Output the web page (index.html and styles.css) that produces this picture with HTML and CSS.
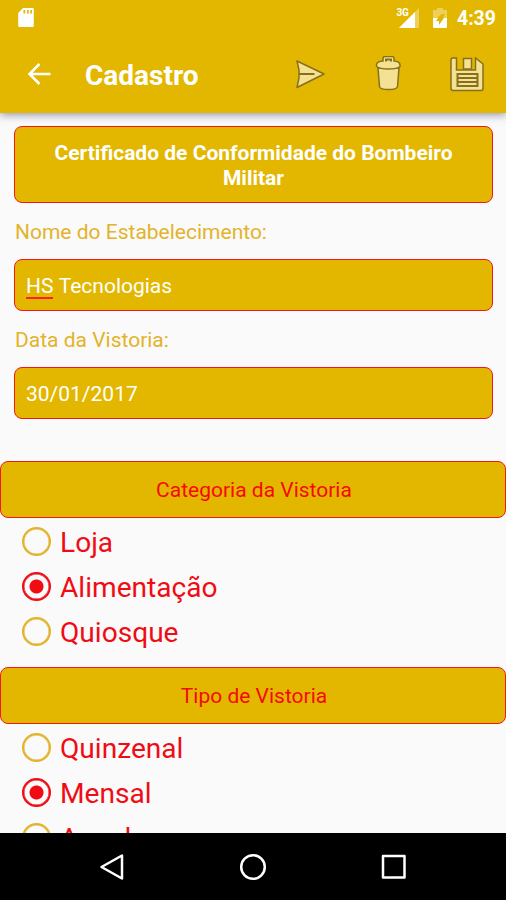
FILE: index.html
```html
<!DOCTYPE html>
<html lang="pt-BR">
<head>
    <meta charset="UTF-8">
    <meta name="viewport" content="width=device-width, initial-scale=1.0">
    <link rel="stylesheet" href="styles.css">
    <title>Cadastro</title>
</head>
<body>
    <header class="header">
        <div class="status-bar">
            <svg class="sd-card" width="18" height="22" viewBox="0 0 18 22">
                <path fill="#fff" fill-rule="evenodd" d="M6 1h9.500a1.300 1.300 0 0 1 1.300 1.300v16.400a1.300 1.300 0 0 1-1.300 1.300h-13a1.300 1.300 0 0 1-1.300-1.300V6zM6.500 3v3.500h1.700V3zM10 3v3.500h1.700V3zM13.300 3v3.500H15V3z"/>
            </svg>
            <div class="signal">
                <span class="network">3G</span>
                <svg width="21" height="20" viewBox="0 0 21 20">
                    <path fill="#fff" fill-opacity=".35" d="M0 20L20 0v20z"/>
                    <path fill="#fff" d="M0 20L16 4v16z"/>
                </svg>
            </div>
            <svg class="battery" width="14" height="20" viewBox="0 0 14 20">
                <path fill="#fff" fill-opacity=".35" d="M4 0h6v2h4v8h-4L12 6H9L4 10H0V2h4z"/>
                <path fill="#fff" fill-rule="evenodd" d="M0 10h5L3 13h3v4l5-7h3v9a1 1 0 0 1-1 1H1a1 1 0 0 1-1-1z"/>
            </svg>
            <span class="clock">4:39</span>
        </div>
        <div class="toolbar">
            <svg class="back" width="24" height="24" viewBox="0 0 24 24" fill="none" stroke="#fff" stroke-width="2.600">
                <path d="M23.500 11H3M12.500 1L2.500 11l10 10"/>
            </svg>
            <h1 class="title">Cadastro</h1>
            <div class="actions">
                <svg width="30" height="30" viewBox="0 0 30 30" fill="#f5e193" stroke="#86701c" stroke-width="1.500" stroke-linejoin="round">
                    <path d="M1 1L28 14 1 27.500 3 18v-8z"/>
                    <path fill="none" stroke-width="2" d="M3 14H18.500"/>
                </svg>
                <svg width="26" height="38" viewBox="0 0 26 38" fill="#f5e193" stroke="#86701c" stroke-width="1.500">
                    <path d="M3 12l1.500 18.500q.3 3 9 3t9-3L24 12z"/>
                    <path d="M1.500 9q0-3.500 6.500-4V2.500q0-2 2-2h7q2 0 2 2V5q6 .5 6 4v1.500q-2.500 2.500-11.500 2.500T1.500 10.500z"/>
                    <path fill="none" stroke-width="2" d="M11 5.500v-2h5v2"/>
                </svg>
                <svg width="34" height="36" viewBox="0 0 34 36" fill="#f5e193" stroke="#86701c" stroke-width="1.500">
                    <path d="M1 3q0-2 2-2h3.500v12h19V1L33 7v24q0 2.500-2 2.500H3q-2 0-2-2.500z"/>
                    <path d="M13.500 1.500h8V12h-8z"/>
                    <path d="M7.500 17h20v12h-20zM8 21h19M8 25h19" stroke-width="2"/>
                </svg>
            </div>
        </div>
    </header>

    <main class="content">
        <div class="form">
            <div class="box banner">Certificado de Conformidade do Bombeiro Militar</div>
            <div class="label">Nome do Estabelecimento:</div>
            <div class="box field"><span class="misspelled">HS</span>&nbsp;Tecnologias</div>
            <div class="label">Data da Vistoria:</div>
            <div class="box field">30/01/2017</div>
        </div>

        <div class="box section">Categoria da Vistoria</div>
        <div class="options">
            <div class="option"><span class="radio"></span>Loja</div>
            <div class="option"><span class="radio checked"></span>Alimentação</div>
            <div class="option"><span class="radio"></span>Quiosque</div>
        </div>

        <div class="box section">Tipo de Vistoria</div>
        <div class="options">
            <div class="option"><span class="radio"></span>Quinzenal</div>
            <div class="option"><span class="radio checked"></span>Mensal</div>
            <div class="option"><span class="radio"></span>Anual</div>
        </div>
    </main>

    <nav class="nav-bar">
        <svg width="28" height="28" viewBox="0 0 28 28" fill="none" stroke="#fff" stroke-width="2.500" stroke-linejoin="round">
            <path d="M24 2.500v23L3.500 14z"/>
        </svg>
        <svg width="28" height="28" viewBox="0 0 28 28" fill="none" stroke="#fff" stroke-width="2.500">
            <circle cx="14" cy="14" r="11.800"/>
        </svg>
        <svg width="28" height="28" viewBox="0 0 28 28" fill="none" stroke="#fff" stroke-width="2.500" stroke-linejoin="round">
            <path d="M3 3h21.500v21.500H3z"/>
        </svg>
    </nav>
</body>
</html>
```
FILE: styles.css
```css
* {
    box-sizing: border-box;
}

body {
    display: flex;
    flex-direction: column;
    height: 900px;
    margin: 0;
    overflow: hidden;
    background-color: #fafafa;
    font-family: Roboto, "Liberation Sans", sans-serif;
}

svg {
    display: block;
    flex: none;
}

.header {
    flex: none;
    height: 113px;
    background-color: #e3b700;
    box-shadow: 0 2px 8px rgba(50, 50, 90, 0.5);
    z-index: 1;
}

.status-bar {
    display: flex;
    align-items: center;
    height: 36px;
    padding: 0 10px 0 17px;
    color: #fff;
}

.signal {
    display: flex;
    align-items: flex-end;
    margin-left: auto;
}

.network {
    align-self: flex-start;
    margin-right: -10px;
    font-size: 10px;
    font-weight: 700;
    line-height: 10px;
}

.battery {
    margin: 0 1px 0 13px;
}

.clock {
    margin-left: 9px;
    font-size: 19.500px;
    font-weight: 700;
}

.toolbar {
    display: flex;
    align-items: center;
    height: 77px;
    padding: 0 22px 0 27px;
}

.title {
    margin: 1px 0 0 34px;
    color: #fff;
    font-size: 28px;
    font-weight: 700;
}

.actions {
    display: flex;
    align-items: center;
    gap: 49px;
    margin-left: auto;
}

.content {
    flex: 1;
    min-height: 0;
    overflow: hidden;
}

.form {
    padding: 13px 13px 0 14px;
}

.box {
    border: 1px solid #f01818;
    border-radius: 8px;
    background-color: #e3b700;
}

.banner {
    height: 77px;
    padding: 14px 30px;
    color: #fff;
    font-size: 21px;
    font-weight: 700;
    line-height: 24.500px;
    text-align: center;
}

.label {
    height: 56px;
    padding-left: 1px;
    color: #e3b32a;
    font-size: 21px;
    line-height: 59px;
}

.field {
    display: flex;
    align-items: center;
    height: 52px;
    padding: 1px 0 0 11px;
    color: #fff;
    font-size: 21px;
}

.misspelled {
    margin-top: 2px;
    border-bottom: 2px solid #f22;
    line-height: 22px;
}

.section {
    height: 57px;
    padding-left: 2px;
    color: #f50a0a;
    font-size: 21px;
    line-height: 57px;
    text-align: center;
}

.form + .section {
    margin-top: 42px;
}

.options {
    height: 149px;
    padding: 2px 0 0 22px;
}

.option {
    display: flex;
    align-items: center;
    height: 45px;
    color: #f00c14;
    font-size: 28.100px;
    line-height: 36px;
}

.radio {
    width: 29px;
    height: 29px;
    margin: 0 9px 3px 0;
    border: 2px solid #e3b32a;
    border-radius: 50%;
    box-shadow: inset 0 0 0 0.500px #e3b32a;
}

.checked {
    border-color: #f00c14;
    background: radial-gradient(circle, #f00c14 6.500px, transparent 7.500px);
    box-shadow: inset 0 0 0 0.500px #f00c14;
}

.nav-bar {
    display: flex;
    flex: none;
    align-items: center;
    justify-content: center;
    gap: 113px;
    height: 67px;
    background-color: #000;
}
```
